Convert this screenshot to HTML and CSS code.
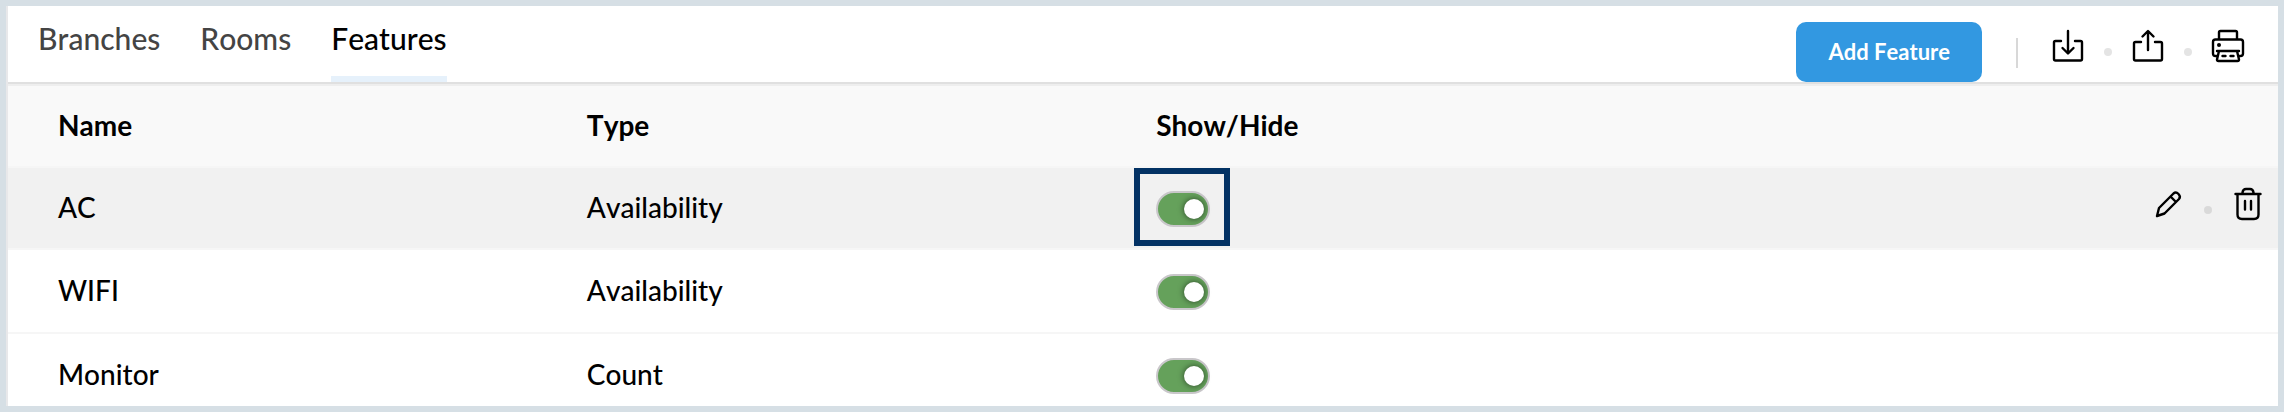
FILE: index.html
```html
<!DOCTYPE html>
<html lang="en">
<head>
<meta charset="utf-8">
<title>Features</title>
<link rel="stylesheet" href="styles.css">
</head>
<body>
<div class="panel">
  <header class="toolbar">
    <nav class="tabs">
      <a class="tab" href="#branches">Branches</a>
      <a class="tab" href="#rooms">Rooms</a>
      <a class="tab tab-active" href="#features" aria-current="page">Features</a>
    </nav>
    <div class="tools">
      <button class="add-button" type="button">Add Feature</button>
      <span class="divider"></span>
      <div class="icon-group">
        <button class="icon-button" type="button" aria-label="Import">
          <svg class="icon" viewBox="0 0 32 32"><path d="M9 11H3.500Q2 11 2 12.500V29Q2 30.500 3.500 30.500H28.500Q30 30.500 30 29V12.500Q30 11 28.500 11H23M16 1V23M10.500 18L16 23.500L21.500 18"/></svg>
        </button>
        <span class="dot"></span>
        <button class="icon-button" type="button" aria-label="Export">
          <svg class="icon" viewBox="0 0 32 32"><path d="M9 12H3.500Q2 12 2 13.500V29Q2 30.500 3.500 30.500H28.500Q30 30.500 30 29V13.500Q30 12 28.500 12H23M16 20V1.500M10.500 6.500L16 1L21.500 6.500"/></svg>
        </button>
        <span class="dot"></span>
        <button class="icon-button" type="button" aria-label="Print">
          <svg class="icon" viewBox="0 0 32 32"><path d="M7 9V2.500Q7 1 8.500 1H23.500Q25 1 25 2.500V9M5 26H3.500Q1 26 1 23.500V12Q1 9.500 3.500 9.500H28.500Q31 9.500 31 12V23.500Q31 26 28.500 26H27M5 21H27M7 21L5 29.500Q5 31 6.500 31H25.500Q27 31 27 29.500L25 21M10.500 26H13.500M18.500 26H21.500"/><circle class="icon-fill" cx="7" cy="15" r="2"/></svg>
        </button>
      </div>
    </div>
  </header>
  <table class="features">
    <thead>
      <tr class="row">
        <th class="cell col-name" scope="col">Name</th>
        <th class="cell col-type" scope="col">Type</th>
        <th class="cell" scope="col">Show/Hide</th>
        <td class="cell col-actions"></td>
      </tr>
    </thead>
    <tbody>
      <tr class="row row-current">
        <td class="cell col-name">AC</td>
        <td class="cell">Availability</td>
        <td class="cell cell-marked"><input class="toggle" type="checkbox" role="switch" aria-label="Show AC" checked></td>
        <td class="cell col-actions">
          <div class="icon-group">
            <button class="icon-button" type="button" aria-label="Edit AC">
              <svg class="icon" viewBox="0 0 32 32"><path d="M5 28L7 20L21.500 5.500Q24 3.500 26.500 6Q29 8.500 27 11L12.500 25.500ZM18.500 8.500L24 14"/></svg>
            </button>
            <span class="dot dot-dark"></span>
            <button class="icon-button" type="button" aria-label="Delete AC">
              <svg class="icon" viewBox="0 0 32 32"><path d="M3.500 6H28.500M10.500 6V4.500Q11 1 14 1H18Q21 1 21.500 4.500V6M5.500 6V26.500Q5.500 31 10 31H22Q26.500 31 26.500 26.500V6M13 13V21.500M19 13V21.500"/></svg>
            </button>
          </div>
        </td>
      </tr>
      <tr class="row">
        <td class="cell col-name">WIFI</td>
        <td class="cell">Availability</td>
        <td class="cell"><input class="toggle" type="checkbox" role="switch" aria-label="Show WIFI" checked></td>
        <td class="cell col-actions"></td>
      </tr>
      <tr class="row">
        <td class="cell col-name">Monitor</td>
        <td class="cell">Count</td>
        <td class="cell"><input class="toggle" type="checkbox" role="switch" aria-label="Show Monitor" checked></td>
        <td class="cell col-actions"></td>
      </tr>
    </tbody>
  </table>
</div>
</body>
</html>
```
FILE: styles.css
```css
*,
*::before,
*::after {
  box-sizing: border-box;
}

body {
  margin: 0;
  color: #000;
  font-family: Lato, sans-serif;
  font-size: 28px;
  font-weight: 500;
  font-kerning: none;
  line-height: 34px;
}

.panel {
  height: 100vh;
  overflow: hidden;
  border: 6px solid #d6dfe5;
  background: #fff;
  box-shadow: inset 2px 0 #e8e8ea;
  padding-left: 2px;
}

.toolbar {
  position: relative;
  display: flex;
  justify-content: space-between;
  align-items: stretch;
  border-bottom: 2px solid #e0e0e0;
  box-shadow: 0 2px #eee;
}

.tabs {
  display: flex;
  gap: 40px;
  padding-left: 30px;
}

.tab {
  padding-top: 14px;
  border-bottom: 6px solid transparent;
  color: #444;
  font-size: 30px;
  line-height: 36px;
  text-decoration: none;
}

.tab-active {
  border-bottom-color: #e6f1fb;
  color: #000;
}

.tools {
  display: flex;
  align-items: flex-end;
  padding: 16px 34px 0 0;
}

.add-button {
  height: 60px;
  padding: 0 32px;
  border: 0;
  border-radius: 10px;
  background: #3298e1;
  color: #fff;
  font: bold 22px/28px Lato, sans-serif;
  font-kerning: none;
}

.divider {
  width: 2px;
  height: 30px;
  margin: 0 34px 14px;
  background: #d8d8d8;
}

.icon-group {
  display: flex;
  justify-content: flex-end;
  align-items: flex-end;
  gap: 20px;
}

.tools .icon-group {
  padding-bottom: 20px;
}

.icon-button {
  padding: 0;
  border: 0;
  background: none;
}

.icon {
  display: block;
  width: 32px;
  height: 32px;
  overflow: visible;
  fill: none;
  stroke: #000;
  stroke-width: 2.4;
  stroke-linecap: round;
  stroke-linejoin: round;
}

.icon-fill {
  fill: #000;
  stroke: none;
}

.dot {
  width: 8px;
  height: 8px;
  margin-bottom: 6px;
  border-radius: 50%;
  background: #e4e4e4;
}

.dot-dark {
  background: #d9d9d9;
}

.features {
  width: 100%;
  table-layout: fixed;
  border-collapse: separate;
  border-spacing: 0;
}

.features thead {
  background: #f9f9f9;
}

.cell {
  height: 84px;
  padding: 0;
  border-bottom: 2px solid #f6f6f6;
  text-align: left;
  vertical-align: middle;
}

th.cell {
  font-weight: 700;
}

.col-name {
  width: 25.500%;
  padding-left: 50px;
}

.col-type {
  width: 25.080%;
}

tbody .cell {
  padding-bottom: 2px;
}

.row-current {
  background: #f1f1f1;
}

.row-current .cell {
  height: 82px;
}

.col-actions {
  padding-right: 14px;
}

.row-current .col-actions {
  padding-bottom: 8px;
}

.cell-marked {
  position: relative;
}

.cell-marked::after {
  content: "";
  position: absolute;
  top: 0;
  bottom: 2px;
  left: -22px;
  width: 96px;
  border: 6px solid #033264;
  pointer-events: none;
}

.toggle {
  appearance: none;
  display: block;
  width: 54px;
  height: 36px;
  margin: 4px 0 0;
  padding: 6px;
  border: 2px solid #c9c7ca;
  border-radius: 18px;
  background: #65a15b;
}

.toggle::before {
  content: "";
  display: block;
  width: 20px;
  height: 20px;
  border-radius: 50%;
  background: #fff;
  box-shadow: 0 0 6px rgba(0, 0, 0, 0.6);
}

.toggle:checked::before {
  margin-left: auto;
  margin-right: -2px;
}
```
